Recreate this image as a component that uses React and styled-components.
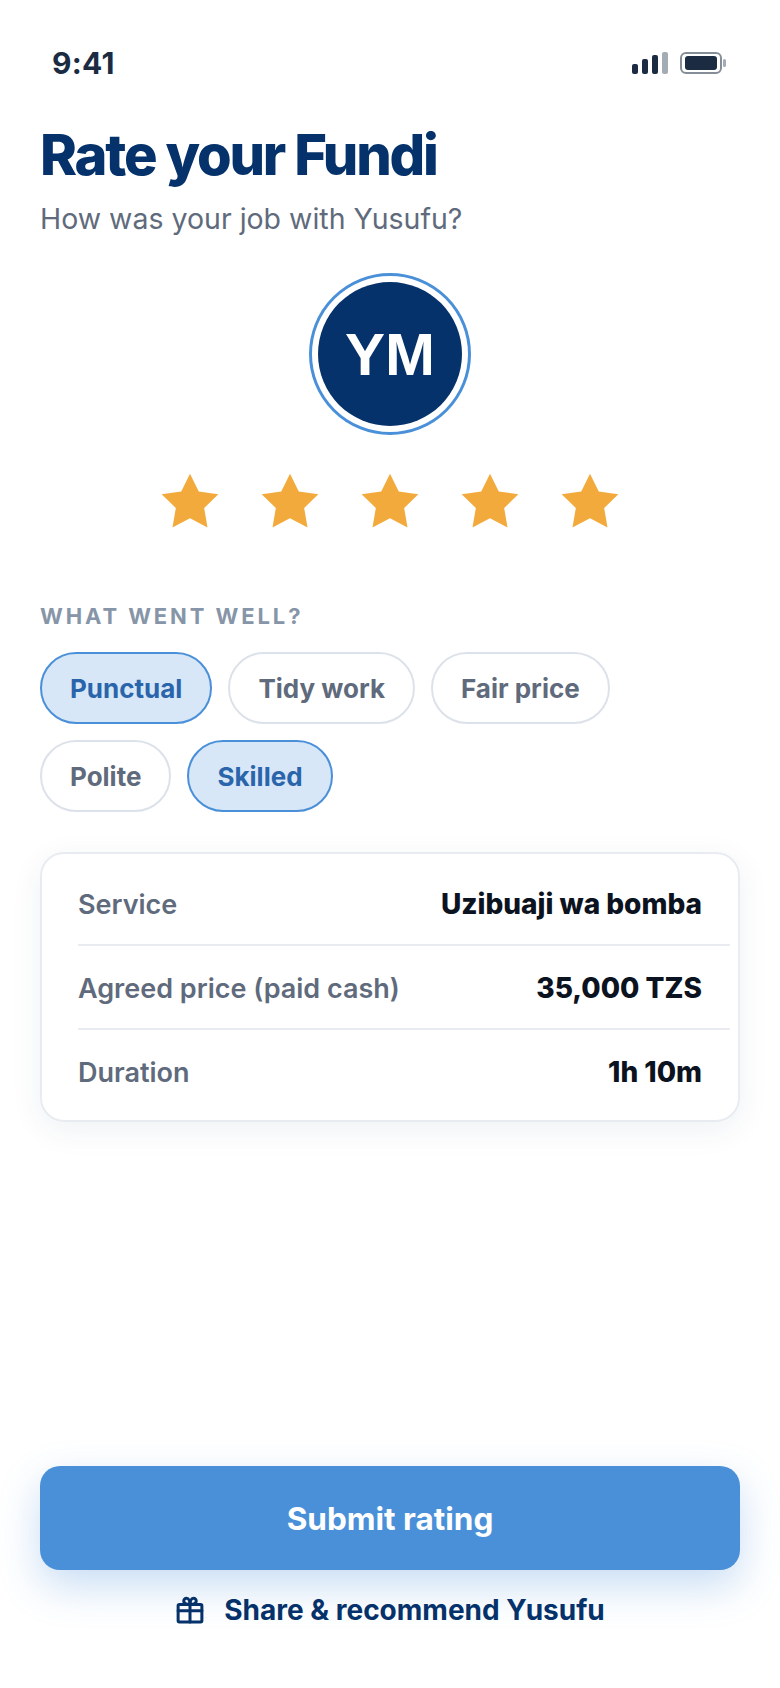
import React from 'react'
import styled, { createGlobalStyle } from 'styled-components'

const GlobalStyle = createGlobalStyle`
    html, body {
        margin: 0;
        padding: 0;
        background: #fff;
        font-family: "Inter", "Liberation Sans", sans-serif;
    }
    * {
        box-sizing: border-box;
    }
`

const STAR_POINTS = '12 2 15.09 8.26 22 9.27 17 14.14 18.18 21.02 12 17.77 5.82 21.02 7 14.14 2 9.27 8.91 8.26'

const tags = [
    { label: 'Punctual', active: true },
    { label: 'Tidy work', active: false },
    { label: 'Fair price', active: false },
    { label: 'Polite', active: false },
    { label: 'Skilled', active: true },
]

const details = [
    { label: 'Service', value: 'Uzibuaji wa bomba' },
    { label: 'Agreed price (paid cash)', value: '35,000 TZS' },
    { label: 'Duration', value: '1h 10m' },
]

function App() {
    return (
        <Page>
            <GlobalStyle />
            <StatusBar>
                <Clock>9:41</Clock>
                <StatusIcons>
                    <Signal>
                        <Bar $height={10} />
                        <Bar $height={15} />
                        <Bar $height={19} />
                        <Bar $height={22} $dim />
                    </Signal>
                    <Battery>
                        <BatteryFill />
                    </Battery>
                </StatusIcons>
            </StatusBar>

            <Title>Rate your Fundi</Title>
            <Subtitle>How was your job with Yusufu?</Subtitle>

            <AvatarRing>
                <Avatar>YM</Avatar>
            </AvatarRing>

            <Stars>
                {[1, 2, 3, 4, 5].map((n) => (
                    <svg key={n} width="68" height="68" viewBox="0 0 24 24">
                        <polygon points={STAR_POINTS} fill="#F3AA3C" />
                    </svg>
                ))}
            </Stars>

            <SectionLabel>WHAT WENT WELL?</SectionLabel>
            <Chips>
                {tags.map((tag) => (
                    <Chip key={tag.label} $active={tag.active}>{tag.label}</Chip>
                ))}
            </Chips>

            <Card>
                {details.map((row) => (
                    <Row key={row.label}>
                        <RowLabel>{row.label}</RowLabel>
                        <RowValue>{row.value}</RowValue>
                    </Row>
                ))}
            </Card>

            <Footer>
                <SubmitButton>Submit rating</SubmitButton>
                <ShareLink>
                    <svg width="30" height="30" viewBox="0 0 24 24" fill="none" stroke="#05326A" strokeWidth="2.4" strokeLinecap="round" strokeLinejoin="round">
                        <rect x="2.5" y="7.5" width="19" height="14" rx="1" />
                        <path d="M2.5 12.5h19" />
                        <path d="M12 7.5v14" />
                        <path d="M12 7.5C10.5 7.5 7 7.2 7 4.8 7 3.5 8 2.5 9.2 2.5 11.2 2.5 12 5.5 12 7.5Z" />
                        <path d="M12 7.5c1.5 0 5-.3 5-2.7 0-1.3-1-2.3-2.2-2.3-2 0-2.8 3-2.8 5Z" />
                    </svg>
                    Share &amp; recommend Yusufu
                </ShareLink>
            </Footer>
        </Page>
    )
}

const Page = styled.div`
    width: 780px;
    height: 1688px;
    padding: 0 40px 0;
    display: flex;
    flex-direction: column;
    background: #fff;
    overflow: hidden;
`

const StatusBar = styled.div`
    height: 127px;
    padding: 43px 18px 0 12px;
    display: flex;
    justify-content: space-between;
    align-items: flex-start;
`

const Clock = styled.span`
    font-size: 30px;
    line-height: 40px;
    font-weight: 700;
    color: #1A2B42;
    letter-spacing: 0.3px;
`

const StatusIcons = styled.div`
    display: flex;
    align-items: center;
    gap: 12px;
    margin-top: 9px;
`

const Signal = styled.div`
    display: flex;
    align-items: flex-end;
    gap: 4px;
    height: 22px;
`

const Bar = styled.span`
    width: 6px;
    height: ${(p) => p.$height}px;
    border-radius: 2px;
    background: ${(p) => (p.$dim ? '#A4ABB5' : '#1A2B42')};
`

const Battery = styled.div`
    position: relative;
    width: 42px;
    height: 22px;
    padding: 2px 3px;
    border: 2px solid #858D99;
    border-radius: 6px;

    &::after {
        content: '';
        position: absolute;
        right: -6px;
        top: 5px;
        width: 3px;
        height: 8px;
        border-radius: 2px;
        background: #A4ABB5;
    }
`

const BatteryFill = styled.div`
    width: 100%;
    height: 100%;
    border-radius: 3px;
    background: #1A2B42;
`

const Title = styled.h1`
    margin: 0;
    font-size: 56px;
    line-height: 56px;
    font-weight: 800;
    letter-spacing: -2.2px;
    color: #05326A;
`

const Subtitle = styled.p`
    margin: 18px 0 0;
    font-size: 28.5px;
    line-height: 36px;
    font-weight: 400;
    color: #5F6B7C;
`

const AvatarRing = styled.div`
    align-self: center;
    margin-top: 36px;
    width: 162px;
    height: 162px;
    padding: 6px;
    border: 3px solid #4A90D9;
    border-radius: 50%;
`

const Avatar = styled.div`
    width: 100%;
    height: 100%;
    border-radius: 50%;
    background: #05326A;
    color: #fff;
    font-family: "Liberation Sans", sans-serif;
    font-size: 60px;
    font-weight: 700;
    display: flex;
    align-items: center;
    justify-content: center;
`

const Stars = styled.div`
    display: flex;
    justify-content: center;
    gap: 32px;
    margin-top: 33px;
`

const SectionLabel = styled.div`
    margin-top: 67px;
    font-size: 22px;
    line-height: 26px;
    font-weight: 700;
    letter-spacing: 2.9px;
    color: #8795A8;
`

const Chips = styled.div`
    display: flex;
    flex-wrap: wrap;
    gap: 16px;
    margin-top: 23px;
`

const Chip = styled.div`
    height: 72px;
    padding: 0 28px;
    display: flex;
    align-items: center;
    border-radius: 36px;
    border: 2px solid ${(p) => (p.$active ? '#4A90D9' : '#DDE2EA')};
    background: ${(p) => (p.$active ? '#D7E7F7' : '#fff')};
    color: ${(p) => (p.$active ? '#2A65AB' : '#5F6B7C')};
    font-size: 26px;
    font-weight: 700;
`

const Card = styled.div`
    margin-top: 40px;
    padding: 8px 8px 8px 36px;
    border: 2px solid #E8ECF1;
    border-radius: 24px;
    box-shadow: 0 8px 32px rgba(5, 50, 106, 0.07);
`

const Row = styled.div`
    height: 84px;
    padding: 2px 28px 0 0;
    display: flex;
    align-items: center;
    justify-content: space-between;
    border-bottom: 2px solid #E8ECF1;

    &:last-child {
        height: 82px;
        border-bottom: none;
    }
`

const RowLabel = styled.span`
    font-size: 27px;
    font-weight: 600;
    color: #5F6B7C;
`

const RowValue = styled.span`
    font-size: 28px;
    font-weight: 800;
    color: #0B1220;
`

const Footer = styled.div`
    margin-top: auto;
    padding-bottom: 60px;
    display: flex;
    flex-direction: column;
    align-items: center;
`

const SubmitButton = styled.button`
    width: 100%;
    height: 104px;
    border: none;
    border-radius: 20px;
    background: #4A90D9;
    color: #fff;
    font-family: inherit;
    font-size: 31.5px;
    font-weight: 700;
    box-shadow: 0 16px 40px rgba(74, 144, 217, 0.3);
`

const ShareLink = styled.div`
    margin-top: 22px;
    display: flex;
    align-items: center;
    gap: 19px;
    font-size: 28px;
    line-height: 36px;
    font-weight: 700;
    color: #05326A;
`

export default App
